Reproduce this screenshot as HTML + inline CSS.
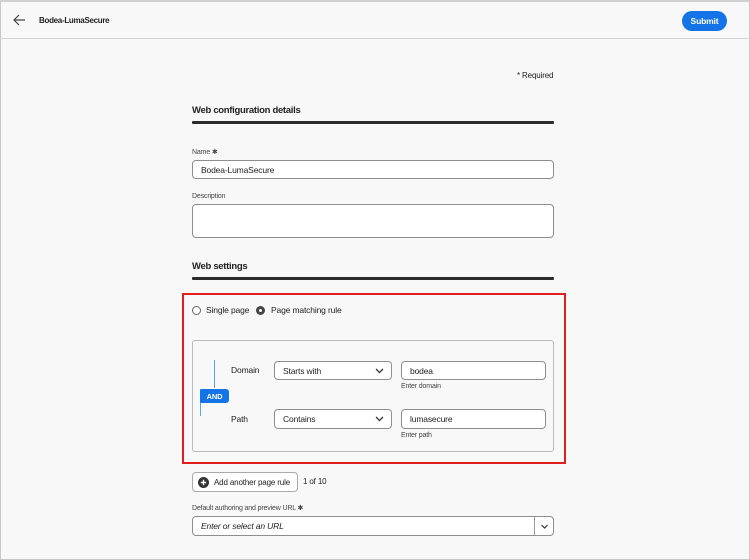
<!DOCTYPE html>
<html><head><style>
*{box-sizing:border-box;margin:0;padding:0}
body{width:750px;height:560px;background:#f8f8f8;font-family:"Liberation Sans",sans-serif;color:#222;position:relative;overflow:hidden;font-size:8px;letter-spacing:-0.15px;white-space:nowrap}
.a{position:absolute}
.frame{left:0;top:0;width:750px;height:560px;border:1px solid #c8c8c8;border-top:2px solid #d0d0d0}
.inp{position:absolute;background:#fff;border:1px solid #8e8e8e;border-radius:4px;font-size:8.5px;padding-left:8px;display:flex;align-items:center}
.lbl{position:absolute;font-size:7px;color:#444}
.h{position:absolute;font-size:9.5px;font-weight:bold;color:#222;letter-spacing:-0.3px}
.bar{position:absolute;left:192px;width:362px;height:3px;background:#2c2c2c;border-radius:1px}
.chev{position:absolute;right:7px;top:5px}
</style></head><body>
<div class="a frame"></div>
<div class="a" style="left:0;top:38px;width:748px;height:1px;background:#d4d4d4"></div>
<svg class="a" style="left:13px;top:14px" width="13" height="12" viewBox="0 0 13 12"><path d="M12 6H1.5M6 1L1 6l5 5" fill="none" stroke="#444" stroke-width="1.2"/></svg>
<div class="a" style="left:39px;top:16px;font-size:8px;font-weight:bold;letter-spacing:-0.3px">Bodea-LumaSecure</div>
<div class="a" style="left:682px;top:11px;width:45px;height:20px;border-radius:10px;background:#1473e6;color:#fff;font-size:8.5px;font-weight:bold;display:flex;align-items:center;justify-content:center">Submit</div>
<div class="a" style="left:517px;top:71px;font-size:8px">* Required</div>
<div class="h" style="left:192px;top:105px">Web configuration details</div>
<div class="bar" style="top:121px"></div>
<div class="lbl" style="left:192px;top:148px">Name ✱</div>
<div class="inp" style="left:192px;top:160px;width:362px;height:19px">Bodea-LumaSecure</div>
<div class="lbl" style="left:192px;top:193px">Description</div>
<div class="inp" style="left:192px;top:204px;width:362px;height:34px"></div>
<div class="h" style="left:192px;top:261px">Web settings</div>
<div class="bar" style="top:277px"></div>
<div class="a" style="left:182px;top:293px;width:384px;height:171px;border:2px solid #e01e1e"></div>
<div class="a" style="left:192px;top:306px;width:9px;height:9px;border:1.3px solid #666;border-radius:50%;background:#fff"></div>
<div class="a" style="left:206px;top:305px;font-size:8.5px">Single page</div>
<div class="a" style="left:256px;top:306px;width:9px;height:9px;border:3px solid #444;border-radius:50%;background:#fff"></div>
<div class="a" style="left:271px;top:305px;font-size:8.5px">Page matching rule</div>
<div class="a" style="left:192px;top:340px;width:362px;height:112px;border:1px solid #bbb;border-radius:3px"></div>
<div class="a" style="left:214px;top:360px;width:1px;height:28px;background:#5aa0ff"></div>
<div class="a" style="left:200px;top:402px;width:1px;height:14px;background:#5aa0ff"></div>
<div class="a" style="left:200px;top:389px;width:29px;height:14px;background:#1473e6;color:#fff;font-size:7.5px;font-weight:bold;display:flex;align-items:center;justify-content:center;border-radius:1px 3px 3px 1px">AND</div>
<div class="a" style="left:231px;top:365px;font-size:8.5px">Domain</div>
<div class="inp" style="left:274px;top:361px;width:118px;height:19px">Starts with<svg class="chev" width="9" height="7" viewBox="0 0 9 7"><path d="M1 2l3.5 3.5L8 2" fill="none" stroke="#333" stroke-width="1.3"/></svg></div>
<div class="inp" style="left:401px;top:361px;width:145px;height:19px">bodea</div>
<div class="lbl" style="left:401px;top:383px">Enter domain</div>
<div class="a" style="left:231px;top:414px;font-size:8.5px">Path</div>
<div class="inp" style="left:274px;top:409px;width:118px;height:20px">Contains<svg class="chev" width="9" height="7" viewBox="0 0 9 7"><path d="M1 2l3.5 3.5L8 2" fill="none" stroke="#333" stroke-width="1.3"/></svg></div>
<div class="inp" style="left:401px;top:409px;width:145px;height:20px">lumasecure</div>
<div class="lbl" style="left:401px;top:432px">Enter path</div>
<div class="inp" style="left:192px;top:472px;width:106px;height:20px;border-color:#aaa;padding-left:5px;font-size:8px"><svg width="11" height="11" viewBox="0 0 11 11" style="margin-right:5px;flex:none"><circle cx="5.5" cy="5.5" r="5.5" fill="#333"/><path d="M5.5 2.8v5.4M2.8 5.5h5.4" stroke="#fff" stroke-width="1.4"/></svg>Add another page rule</div>
<div class="a" style="left:303px;top:477px;font-size:8px">1 of 10</div>
<div class="lbl" style="left:192px;top:504px">Default authoring and preview URL ✱</div>
<div class="inp" style="left:192px;top:516px;width:362px;height:20px;font-style:italic">Enter or select an URL
<div class="a" style="left:341px;top:0;width:1px;height:18px;background:#999"></div>
<svg class="a" style="left:347px;top:6px" width="9" height="7" viewBox="0 0 9 7"><path d="M1.5 2l3 3 3-3" fill="none" stroke="#333" stroke-width="1.2"/></svg></div>
</body></html>
